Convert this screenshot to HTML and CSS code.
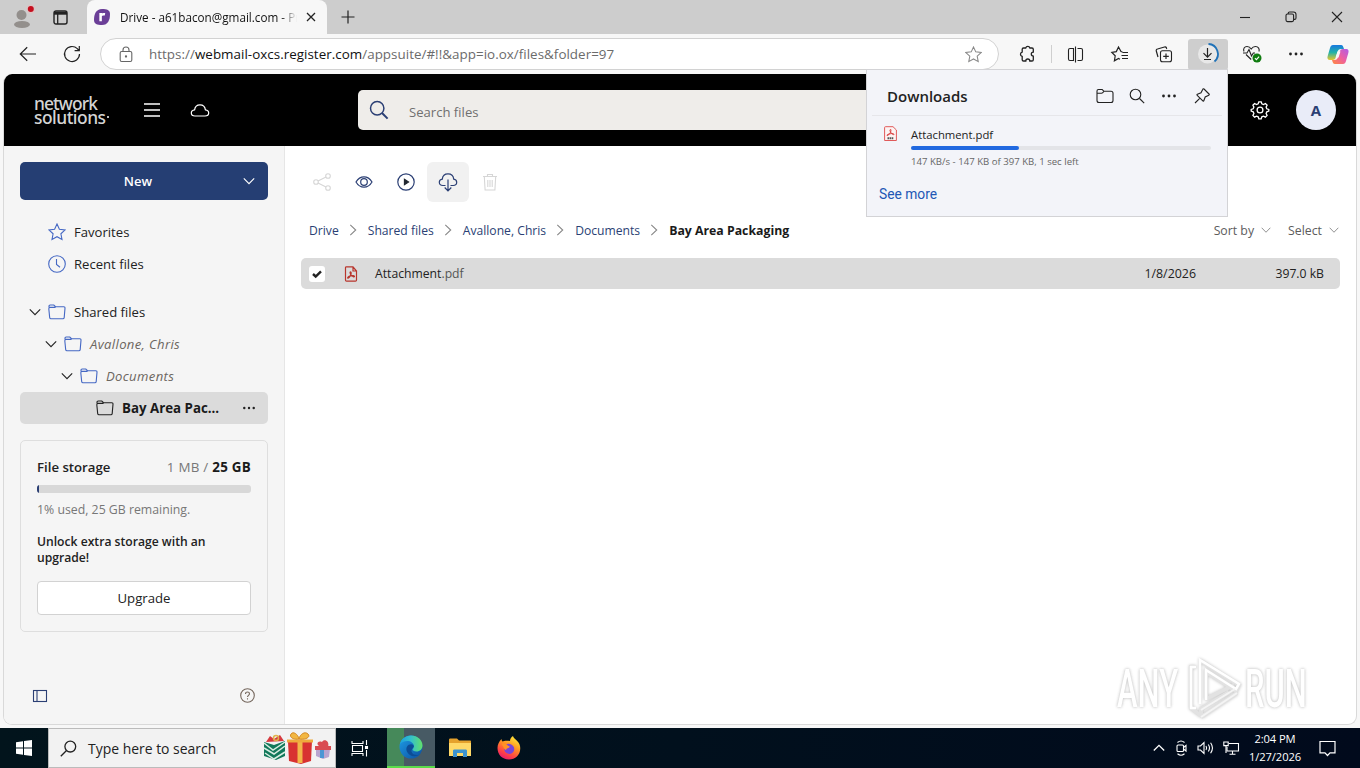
FILE: index.html
```html
<!DOCTYPE html>
<html lang="en">
<head>
	<meta charset="utf-8">
	<title>Drive - a61bacon@gmail.com</title>
	<link rel="stylesheet" href="styles.css">
</head>
<body>
	<!-- shared icons -->
	<svg class="defs" width="0" height="0">
		<defs>
			<linearGradient id="edgeA" x1="0" y1="0" x2="1" y2="0"><stop offset="0" stop-color="#1aa0e0"/><stop offset=".5" stop-color="#35c1c9"/><stop offset="1" stop-color="#62e06a"/></linearGradient>
			<linearGradient id="edgeB" x1="0" y1="0" x2="1" y2="1"><stop offset="0" stop-color="#1e9de5"/><stop offset="1" stop-color="#0b4fa0"/></linearGradient>
			<linearGradient id="fox" x1=".8" y1="0" x2=".3" y2="1"><stop offset="0" stop-color="#fff03c"/><stop offset=".4" stop-color="#ff9a22"/><stop offset=".75" stop-color="#ff4444"/><stop offset="1" stop-color="#e8186e"/></linearGradient>
			<linearGradient id="cpA" x1="0" y1="0" x2="0" y2="1"><stop offset="0" stop-color="#1778e0"/><stop offset=".5" stop-color="#23b2a8"/><stop offset="1" stop-color="#e8c72c"/></linearGradient>
			<linearGradient id="cpB" x1="1" y1="0" x2="0" y2="1"><stop offset="0" stop-color="#b05ce8"/><stop offset=".5" stop-color="#ee5fa0"/><stop offset="1" stop-color="#ff8a3c"/></linearGradient>
			<symbol id="folder" viewBox="0 0 18 16"><path d="M1 3.2V2.3C1 1.6 1.5 1 2.2 1h3.6l1.7 1.7h8.3c.8 0 1.3.6 1.2 1.4l-.8 9.5c-.1.7-.6 1.2-1.3 1.2H3c-.7 0-1.2-.5-1.3-1.2L.8 4.7C.8 4 1.2 3.4 2 3.4h5l.8-.7"/></symbol>
			<symbol id="chev" viewBox="0 0 12 12"><path d="M.8 3.3L6 8.7l5.200-5.400"/></symbol>
			<symbol id="chevr" viewBox="0 0 12 12"><path d="M3.300 .8L8.700 6l-5.400 5.200"/></symbol>
			<symbol id="star" viewBox="0 0 18 18"><path d="M9 1l2.400 5.200 5.700.7-4.200 3.900 1.100 5.700L9 13.700l-5 2.800 1.100-5.700L.9 6.900l5.700-.7z"/></symbol>
			<symbol id="dots" viewBox="0 0 14 4"><circle cx="1.500" cy="2" r="1.400"/><circle cx="7" cy="2" r="1.400"/><circle cx="12.500" cy="2" r="1.400"/></symbol>
		</defs>
	</svg>

	<div class="tabstrip">
		<div class="profile">
			<svg width="22" height="24" viewBox="0 0 22 24"><circle cx="9.500" cy="10" r="5" fill="#938f8c"/><ellipse cx="10" cy="19.500" rx="8" ry="3.500" fill="#938f8c"/><circle cx="18.800" cy="4" r="4.500" fill="#dcc4c4"/><circle cx="18.800" cy="4" r="3" fill="#c50f1f"/></svg>
		</div>
		<svg class="line workspaces" width="15" height="15" viewBox="0 0 15 15"><rect x="1" y="1" width="13" height="13" rx="2" stroke-width="1.400"/><path d="M1 3.200h13" stroke-width="3"/><path d="M4.700 4v10" stroke-width="1.300"/></svg>
		<div class="tab">
			<svg width="16" height="16" viewBox="0 0 16 16"><path d="M8 0c5 0 8 1 8 5 0 6-2 11-8 11-5 0-8-1-8-5C0 5 2 0 8 0z" fill="#6b3f97"/><path d="M6.600 12.300V4M6.500 8c0-2.500 1.800-3.200 4.500-2.700" fill="none" stroke="#fff" stroke-width="2.500"/></svg>
			<span class="tab_title">Drive - a61bacon@gmail.com - Pr</span>
			<svg class="line" width="10" height="10" viewBox="0 0 10 10"><path d="M1 1l8 8M9 1L1 9" stroke-width="1.300"/></svg>
		</div>
		<svg class="line newtab" width="14" height="14" viewBox="0 0 14 14"><path d="M7 .5v13M.5 7h13" stroke-width="1.200"/></svg>
		<div class="win_btns">
			<svg class="line" width="12" height="12" viewBox="0 0 12 12"><path d="M1 6.500h10"/></svg>
			<svg class="line" width="12" height="12" viewBox="0 0 12 12"><rect x="1" y="3" width="7.600" height="7.600" rx="1.500"/><path d="M3.200 3V2.300c0-.8.500-1.300 1.300-1.300H8.500C10 1 11 2 11 3.500V7c0 .8-.6 1.400-1.400 1.400H8.800"/></svg>
			<svg class="line" width="12" height="12" viewBox="0 0 12 12"><path d="M1 1l10 10M11 1L1 11"/></svg>
		</div>
	</div>

	<div class="toolbar">
		<div class="tb"><svg class="line" width="18" height="16" viewBox="0 0 18 16"><path d="M17 8H1.500M8.200 1.200L1.300 8l6.900 6.800" stroke-width="1.200"/></svg></div>
		<div class="tb"><svg class="line" width="18" height="18" viewBox="0 0 18 18"><path d="M16.500 9A7.500 7.500 0 1 1 14.300 3.700L16 5.500M16.300 1v4.700h-4.700" stroke-width="1.200"/></svg></div>
		<div class="omnibox">
			<svg class="line grey" width="14" height="17" viewBox="0 0 14 17"><rect x="1.200" y="5.500" width="11.600" height="10" rx="1.500"/><path d="M4 5.500V4a3 3 0 0 1 6 0v1.500"/><circle cx="7" cy="10.500" r=".6" fill="#666"/></svg>
			<span class="url">https://<b>webmail-oxcs.register.com</b>/appsuite/#!!&amp;app=io.ox/files&amp;folder=97</span>
			<svg class="line lgrey" width="17" height="17"><use href="#star"/></svg>
		</div>
		<div class="tb ext"><svg class="line" width="18" height="18" viewBox="0 0 18 18"><path d="M5.500 3h2.200a2.200 2.200 0 0 1 4.200 0H14c.8 0 1.300.5 1.300 1.300v2.800a2 2 0 0 0 0 4v3.600c0 .8-.5 1.300-1.300 1.300h-2.200a2 2 0 0 0-4 0H5.500c-.8 0-1.300-.5-1.300-1.300v-3.300a2.200 2.200 0 0 1 0-4.300V4.300C4.200 3.500 4.700 3 5.500 3z" stroke-width="1.300"/></svg></div>
		<div class="tb_sep"></div>
		<div class="tb split"><svg class="line" width="17" height="17" viewBox="0 0 17 17"><path d="M6.500 2.500H3c-1 0-1.500.6-1.500 1.500v9c0 1 .5 1.500 1.500 1.500h3.500zM10.500 2.500H14c1 0 1.500.6 1.500 1.500v9c0 1-.5 1.500-1.500 1.500h-3.500M8.500.5v16"/></svg></div>
		<div class="tb"><svg class="line" width="18" height="17" viewBox="0 0 18 17"><path d="M11.500 6L10 5.600 7.500 1 5.300 5.600.8 6.300l3.400 3.500-.8 5 4.100-2.300 1.500.8M11.500 6.500H17M10.500 9.500H17M11 12.500h6" stroke-width="1.200"/></svg></div>
		<div class="tb"><svg class="line" width="18" height="18" viewBox="0 0 18 18"><rect x="5.500" y="5.800" width="11" height="11" rx="2"/><path d="M11 8.500v5.600M8.200 11.300h5.600M3 12L1.300 6c-.3-1 .2-1.800 1.200-2l7-2c1-.3 1.800.2 2 1.200l.2.800" stroke-width="1.200"/></svg></div>
		<div class="tb tb_on"><svg class="line" width="22" height="22" viewBox="0 0 22 22"><circle cx="10.500" cy="11" r="9.500" fill="#e8e8e8" stroke="none"/><path d="M10.500 5v9M6.500 10.200l4 4 4-4M7 16.500h7" stroke-width="1.200"/><path d="M11.500 1A10 10 0 0 1 17.500 18.500" stroke="#1f72b8" stroke-width="1.800"/></svg></div>
		<div class="tb"><svg class="line" width="20" height="18" viewBox="0 0 20 18"><path d="M9.200 14.500L4 9.500M2 6.500C.8 3.700 2.500 1.500 5 1.500c2 0 3.300 1 4.200 2.500 1-1.500 2.200-2.500 4.200-2.500 3 0 4.500 2.600 3.500 5M1 8h4l2-3.500 2.500 6.500 1.800-3H13" stroke-width="1.100"/><circle cx="15" cy="13" r="4.500" fill="#107c10" stroke="none"/><path d="M12.900 13.200l1.500 1.400 2.700-3" stroke="#fff"/></svg></div>
		<div class="tb"><svg class="dots" width="14" height="4"><use href="#dots"/></svg></div>
		<div class="tb copilot"><svg width="22" height="21" viewBox="0 0 22 21"><path d="M6 1h8c2 0 2.300 2 3 4h-3c-2 0-3 1-3.500 3L9 13c-.7 2-1.500 3-3.500 3H3C.5 16 0 14 .7 12L3 4c.5-2 1.500-3 3-3z" fill="url(#cpA)"/><path d="M16 20H8c-2 0-2.300-2-3-4h2.500c2 0 3-1 3.500-3l1.500-5c.7-2 1.500-3 3.500-3h3c2.500 0 3 2 2.300 4L19 17c-.5 2-1.500 3-3 3z" fill="url(#cpB)"/><path d="M10.500 7.500h3l-2 6H8.500z" fill="#f7f7f7"/></svg></div>
	</div>

	<div class="page">
		<div class="app_header">
			<div class="logo"><div>network</div><div class="logo2">solutions<i></i></div></div>
			<svg class="line white burger" width="16" height="14" viewBox="0 0 16 14"><path d="M0 1h16M0 7h16M0 13h16" stroke-width="1.300"/></svg>
			<svg class="line white cloud" width="20" height="15" viewBox="0 0 20 15"><path d="M5 13C2.800 13 1.300 11.800 1.300 10c0-1.700 1.300-3 3.300-3.200C5 3.800 7.200 1.800 10 1.800s5 2 5.400 5c2 .2 3.300 1.500 3.300 3.200 0 1.800-1.500 3-3.700 3z" stroke-width="1.200"/></svg>
			<div class="search">
				<svg class="line navy" width="20" height="20" viewBox="0 0 20 20"><circle cx="8.200" cy="8.200" r="6.700" stroke-width="1.500"/><path d="M13 13l5.600 5.600" stroke-width="2"/></svg>
				<span>Search files</span>
			</div>
			<svg class="line white gear" width="20" height="20" viewBox="0 0 20 20"><circle cx="10" cy="10" r="2.900" stroke-width="1.300"/><path d="M8.800 1.800h2.400l.6 2 1.700.7 1.900-1 1.700 1.700-1 1.900.7 1.700 2 .6v1.700l-2 .7-.7 1.700 1 1.900-1.700 1.700-1.900-1-1.700.7-.6 2H8.800l-.6-2-1.700-.7-1.900 1-1.700-1.700 1-1.900-.7-1.700-2-.7V9.400l2-.6.7-1.700-1-1.900 1.700-1.700 1.900 1 1.700-.7z" stroke-width="1.300"/></svg>
			<div class="avatar">A</div>
		</div>

		<div class="app_body">
			<div class="sidebar">
				<div class="new_btn"><span>New</span><svg class="line white" width="12" height="12"><use href="#chev"/></svg></div>
				<div class="tree">
					<div class="row lvl0"><i class="caret"></i><svg class="line blue" width="18" height="18"><use href="#star"/></svg><span>Favorites</span></div>
					<div class="row lvl0"><i class="caret"></i><svg class="line blue" width="18" height="18" viewBox="0 0 18 18"><circle cx="9" cy="9" r="8.300"/><path d="M8.500 4v5.500l3.500 2.700"/></svg><span>Recent files</span></div>
					<div class="row lvl0 spaced"><svg class="line caret" width="12" height="12"><use href="#chev"/></svg><svg class="line blue" width="18" height="16"><use href="#folder"/></svg><span>Shared files</span></div>
					<div class="row lvl1 virtual"><svg class="line caret" width="12" height="12"><use href="#chev"/></svg><svg class="line blue" width="18" height="16"><use href="#folder"/></svg><span>Avallone, Chris</span></div>
					<div class="row lvl2 virtual"><svg class="line caret" width="12" height="12"><use href="#chev"/></svg><svg class="line blue" width="18" height="16"><use href="#folder"/></svg><span>Documents</span></div>
					<div class="row lvl3 selected"><i class="caret"></i><svg class="line" width="18" height="16"><use href="#folder"/></svg><span>Bay Area Pac...</span><svg class="dots" width="12" height="4"><use href="#dots"/></svg></div>
				</div>
				<div class="storage">
					<div class="storage_head"><b>File storage</b><span>1 MB / <strong>25 GB</strong></span></div>
					<div class="quota"><div style="width: 1%"></div></div>
					<div class="storage_note">1% used, 25 GB remaining.</div>
					<div class="storage_ad">Unlock extra storage with an upgrade!</div>
					<div class="upgrade">Upgrade</div>
				</div>
				<div class="side_foot">
					<svg class="line navy" width="14" height="12" viewBox="0 0 14 12"><rect x=".5" y=".5" width="13" height="11"/><path d="M4 .5v11"/></svg>
					<svg class="line brown" width="15" height="15" viewBox="0 0 15 15"><circle cx="7.500" cy="7.500" r="6.800"/><path d="M5.500 6c0-2.700 4-2.500 4-.2 0 1.500-2 1.600-2 3.200M7.500 10.200v1.200"/></svg>
				</div>
			</div>

			<div class="content">
				<div class="actions">
					<div><svg class="line off" width="18" height="18" viewBox="0 0 18 18"><circle cx="3" cy="9" r="2.300"/><circle cx="15" cy="3" r="2.300"/><circle cx="15" cy="15" r="2.300"/><path d="M5 8l8-4M5 10l8 4"/></svg></div>
					<div><svg class="line navy" width="18" height="14" viewBox="0 0 18 14"><path d="M1 7c2-3.400 4.700-5.200 8-5.200S15 3.600 17 7c-2 3.400-4.700 5.200-8 5.200S3 10.400 1 7z" stroke-width="1.200"/><circle cx="9" cy="7" r="3.300" stroke-width="1.200"/></svg></div>
					<div><svg class="line navy" width="18" height="18" viewBox="0 0 18 18"><circle cx="9" cy="9" r="8.200" stroke-width="1.200"/><path d="M7.400 6.300l4.200 2.700-4.200 2.700z" fill="#20262f" stroke="#20262f"/></svg></div>
					<div class="hover"><svg class="line navy" width="20" height="19" viewBox="0 0 20 19"><path d="M7.500 12.500H4.800C2.500 12.500 1.300 11 1.300 9.300c0-1.700 1.300-3 3-3.200C4.600 3 7 .9 10 .9s5.400 2.100 5.700 5.200c1.700.2 3 1.500 3 3.200 0 1.700-1.200 3.200-3.500 3.200h-2.700M10 6.500v11M6.700 14.500l3.300 3.300 3.300-3.300" stroke-width="1.200"/></svg></div>
					<div><svg class="line off" width="16" height="18" viewBox="0 0 16 18"><path d="M1 3.500h14M5.500 3.500V1.500h5v2M2.300 3.500l.8 13.500h9.800l.8-13.500M5.800 7v7M8 7v7M10.200 7v7"/></svg></div>
				</div>
				<div class="crumbs">
					<span>Drive</span><svg class="line lgrey" width="12" height="12"><use href="#chevr"/></svg>
					<span>Shared files</span><svg class="line lgrey" width="12" height="12"><use href="#chevr"/></svg>
					<span>Avallone, Chris</span><svg class="line lgrey" width="12" height="12"><use href="#chevr"/></svg>
					<span>Documents</span><svg class="line lgrey" width="12" height="12"><use href="#chevr"/></svg>
					<b>Bay Area Packaging</b>
					<div class="sorting">
						<span>Sort by</span><svg class="line lgrey" width="10" height="10"><use href="#chev"/></svg>
						<span class="select">Select</span><svg class="line lgrey" width="10" height="10"><use href="#chev"/></svg>
					</div>
				</div>
				<div class="file">
					<div class="check"><svg width="10" height="8" viewBox="0 0 10 8"><path d="M1 4l2.700 2.500L9 1.300" fill="none" stroke="#222" stroke-width="2.400"/></svg></div>
					<svg class="pdf" width="14" height="16" viewBox="0 0 14 16"><path d="M1.500 1.500v12.500c0 .7.400 1.200 1 1.200h9c.6 0 1-.5 1-1.200V5L9 .8H2.500c-.6 0-1 .2-1 .7zM9 1v4h3.500M3.800 12.200c-.6-.8.700-1.800 2.700-2.300s4-.4 4 .5-2.300.1-3.500-1.400S5.900 5.800 6.600 5.800s.8 1.700.1 3.300-2.200 3.500-2.900 3.100z"/></svg>
					<span class="name">Attachment<em>.pdf</em></span>
					<span class="date">1/8/2026</span>
					<span class="size">397.0 kB</span>
				</div>
			</div>
		</div>
	</div>

	<div class="taskbar">
		<div class="start"><svg width="16" height="16" viewBox="0 0 16 16"><path d="M0 2.200L7 1.200v6.300H0zM8 1l8-1v7.500H8zM0 8.500h7v6.300l-7-1zM8 8.500h8V16l-8-1.100z" fill="#fff"/></svg></div>
		<div class="task_search">
			<svg class="line" width="17" height="17" viewBox="0 0 17 17"><circle cx="10.300" cy="6.600" r="5.400" stroke-width="1.300"/><path d="M6.500 10.500L.8 16.200" stroke-width="1.300"/></svg>
			<span>Type here to search</span>
			<svg width="68" height="34" viewBox="0 0 68 34">
				<path d="M3 11l4-6 4 3 6-4 4 6z" fill="#d63a3f"/><circle cx="13" cy="7" r="2.500" fill="none" stroke="#e0b34c" stroke-width="1.500"/>
				<path d="M1 11l10 3 11-4v15l-9 4-12-4z" fill="#12785a"/><path d="M1 12l9 7 12-8M1 17l10 6 11-8M2 22l9 6 11-7" fill="none" stroke="#d9ede2" stroke-width="1.500"/>
				<path d="M25 11l24-1-1 20-10 3-12-3z" fill="#d83131"/><path d="M37 10v22" stroke="#f3b449" stroke-width="5"/><path d="M24 10h26" stroke="#efaa3c" stroke-width="3"/><path d="M36 8c-6 1-10-2-8-5s7 0 8 5c1-5 6-8 9-5s-2 6-9 5z" fill="#f2b742" stroke="#d58a26"/>
				<path d="M53 17l14 1-1 8-6 2-7-3z" fill="#b9a4cf"/><path d="M59 17v10" stroke="#4b96d4" stroke-width="4"/><path d="M52 17h16" stroke="#d94b52" stroke-width="4"/><path d="M59 16c-7-1-5-7 0-5 2-4 8-1 6 5z" fill="#d94b52"/>
			</svg>
		</div>
		<div class="app_btn"><svg class="line white" width="18" height="17" viewBox="0 0 18 17"><path d="M1 1v2.500h11V1M1 16v-2.500h11V16M1.500 5.500h10v6h-10zM15.500 0v5M15.500 10v6.500"/><rect x="14.500" y="6.500" width="2" height="2" fill="#fff"/></svg></div>
		<div class="app_btn active">
			<svg width="24" height="24" viewBox="0 0 24 24"><circle cx="12" cy="12" r="11.500" fill="url(#edgeB)"/><path d="M.8 9.500C2 4 6.500.5 12 .5c6.500 0 11.500 4.700 11.500 10 0 3.800-2.800 6-6 6-2.700 0-3.900-.9-3.900-1.900 0-.7 1.300-1.300 1.300-3.300C14.900 8 11.500 6 8.300 6 5 6 2.200 7.500.8 9.500z" fill="url(#edgeA)"/><path d="M14.900 11.500c0-1.200-1-2.300-2.700-2.300-3.500 0-6 3.500-4.200 7.500 2 4.300 7.500 6 12.800 2.800-3.200 1.200-7.500.6-8.300-3-.3-2 1.200-3 2.400-5z" fill="#0c4d96"/></svg>
		</div>
		<div class="app_btn"><svg width="22" height="20" viewBox="0 0 22 20"><path d="M0 2c0-1 .4-1.500 1.300-1.500H8l2 2h11c.6 0 1 .4 1 1V18H0z" fill="#e5a22d"/><path d="M0 5h22v13H0z" fill="#ffd968"/><path d="M4 19v-6c0-1 .5-1.500 1.500-1.500h11c1 0 1.500.5 1.500 1.500v6h-4v-4H8v4z" fill="#3d93cf"/></svg></div>
		<div class="app_btn"><svg width="24" height="24" viewBox="0 0 24 24"><path d="M13 5c0-2 1-4 3-5 .3 3 6 4.500 7 10 1.500 7.500-4 13.500-11 13.500S.5 18.500.5 12C.5 8.500 2 5.500 4.500 3c0 1 .5 2 1 2.500C7 5 8.500 4.200 13 5z" fill="url(#fox)"/><path d="M7 12c0-3 3-5 6-4s5 3.500 4 6.500-4 4-6.500 3S7 14.500 7 12z" fill="#7845d8"/><path d="M4.500 8c3-1 5 0 6.500 1.800 1 .2 2 .7 1.700 1.200-1 1.300-3.200 1-3.700 3-1.500-.4-2.500-1.700-2.500-3z" fill="#ff9226"/></svg></div>
		<div class="tray">
			<svg class="line white" width="12" height="12" viewBox="0 0 12 12"><path d="M.8 8.500L6 3.300l5.200 5.200" stroke-width="1.300"/></svg>
			<svg class="line white" width="14" height="16" viewBox="0 0 14 16"><rect x="3" y="5" width="6.500" height="6.500" rx="1"/><path d="M9.500 7.500l2.500-2v5.500L9.500 9M3.500 2.500c2-1.700 5-1.700 7 0M3.500 13.800c2 1.600 5 1.600 7 0"/></svg>
			<svg class="line white" width="17" height="14" viewBox="0 0 17 14"><path d="M1 5h2.500L7 1.500v11L3.500 9H1zM9 5c.8 1.300.8 2.700 0 4M11.300 3.500c1.600 2.300 1.600 4.700 0 7M13.600 1.800c2.500 3.500 2.500 6.900 0 10.400"/></svg>
			<svg class="line white" width="16" height="14" viewBox="0 0 16 14"><path d="M6 2.500h9.500v7.500H4V6M9.500 10v3M6.500 13.300h6"/><path d="M.8 1h4.400v3.600H.8zM3 4.500V12"/></svg>
			<div class="clock">2:04 PM<br>1/27/2026</div>
			<svg class="line white note" width="17" height="17" viewBox="0 0 17 17"><path d="M1 1.500h15v11.300h-5L8.500 15.500 6 12.800H1z" stroke-width="1.200"/></svg>
		</div>
	</div>

	<div class="downloads">
		<div class="dl_head">
			<b>Downloads</b>
			<svg class="line" width="18" height="16" viewBox="0 0 18 16"><path d="M1 3c0-1 .6-1.500 1.500-1.500h3.700L8 3.300h7c1.200 0 2 .8 2 2v7.200c0 1.200-.8 2-2 2H3c-1.200 0-2-.8-2-2zM1 5.300h4.500c1 0 1.500-.5 2.500-2"/></svg>
			<svg class="line glass" width="16" height="16" viewBox="0 0 16 16"><circle cx="6.500" cy="6.500" r="5.300"/><path d="M10.500 10.500l4.700 4.700"/></svg>
			<svg class="dots" width="14" height="4"><use href="#dots"/></svg>
			<svg class="line pin" width="16" height="16" viewBox="0 0 16 16"><path d="M10 1l5 5c.5.500.3 1-.2 1.200L11.200 9l-1.400 3.700c-.2.500-.7.600-1 .2L3.200 7.300c-.4-.4-.3-.9.200-1.100L7 4.800 8.800 1.200C9 .7 9.600.6 10 1zM6 10.200L1 15"/></svg>
		</div>
		<div class="dl_item">
			<svg width="13" height="16" viewBox="0 0 13 16"><path d="M.6 1.500v13h11.800V4L9 .7H1.500c-.6 0-.9.300-.9.800z" fill="#fdf3f3" stroke="#e05a5a"/><path d="M3 9.500c-.3-.9 1.500-1.500 3.500-1.800s3.700 0 3.500.7-2-.2-3-1.700S5.600 4 6.300 3.500s.9 1 .2 2.800S3.500 10 3 9.500z" fill="none" stroke="#d83b3b"/><path d="M3.500 12.300h6" stroke="#555" stroke-width="2" stroke-dasharray="1.600 .5"/></svg>
			<div class="dl_info">
				<div class="dl_name">Attachment.pdf</div>
				<div class="dl_bar"><div style="width: 36%"></div></div>
				<div class="dl_stat">147 KB/s - 147 KB of 397 KB, 1 sec left</div>
			</div>
		</div>
		<div class="see_more">See more</div>
	</div>

	<div class="watermark">
		<span>ANY</span>
		<svg width="56" height="64" viewBox="0 0 56 64"><path d="M14 4l38 24-3 6-30-19v28M9 10H4v41l9 7M19 42l28-14M14 60l36-24M14 60v-8l28-17" fill="none" stroke="#e2e2e2" stroke-width="4"/><path d="M9 10H4v41h5M19 43V13l30 19 3-5L13 3v44" fill="none" stroke="#fff" stroke-width="2.500"/><path d="M14 53l34-21M14 60l36-24" fill="none" stroke="#f4f4f4" stroke-width="2"/></svg>
		<span>RUN</span>
	</div>
</body>
</html>
```
FILE: styles.css
```css
* {
	box-sizing: border-box;
}
body {
	margin: 0;
	width: 1360px;
	height: 768px;
	overflow: hidden;
	position: relative;
	display: flex;
	flex-direction: column;
	background: #f7f7f7;
	color: #222;
	font-family: "Open Sans", "Noto Sans", sans-serif;
	font-size: 13px;
	white-space: nowrap;
}
svg {
	flex: none;
	display: block;
	overflow: visible;
}
.defs {
	position: absolute;
}
.line {
	fill: none;
	stroke: #222;
	stroke-width: 1.1;
}
.grey { stroke: #666; }
.lgrey { stroke: #888; }
.white { stroke: #fff; }
.navy { stroke: #2b3f74; }
.blue { stroke: #4568c4; }
.brown { stroke: #75675d; }
.off { stroke: #d6d6d6; }
.dots {
	fill: #222;
}

/* browser tabs */
.tabstrip {
	display: flex;
	align-items: center;
	height: 34px;
	flex: none;
	background: #cdcdcd;
}
.profile {
	width: 41px;
	padding-left: 12px;
}
.workspaces {
	margin: 0 19px 0 12px;
}
.tab {
	display: flex;
	align-items: center;
	width: 240px;
	height: 34px;
	padding: 0 11px 0 7px;
	background: #f7f7f7;
	border-radius: 8px 8px 0 0;
}
.tab_title {
	width: 177px;
	margin: 0 auto 0 10px;
	overflow: hidden;
	font-size: 11.7px;
	background: linear-gradient(90deg, #111 91%, transparent);
	background-clip: text;
	-webkit-text-fill-color: transparent;
}
.newtab {
	margin-left: 14px;
}
.win_btns {
	display: flex;
	gap: 34px;
	margin-left: auto;
	padding-right: 17px;
}

/* browser toolbar */
.toolbar {
	display: flex;
	align-items: center;
	gap: 4px;
	height: 40px;
	flex: none;
	padding-left: 8px;
}
.tb {
	display: flex;
	align-items: center;
	justify-content: center;
	width: 40px;
	height: 31px;
}
.omnibox {
	display: flex;
	align-items: center;
	width: 899px;
	height: 32px;
	margin-left: 4px;
	padding: 0 16px 0 18px;
	background: #fff;
	border: 1px solid #d2d2d2;
	border-radius: 16px;
}
.url {
	flex: 1;
	margin-left: 16px;
	color: #6b6b6b;
	font-size: 13.4px;
	letter-spacing: .03px;
}
.url b {
	color: #111;
	font-weight: normal;
}
.ext {
	margin-left: 4px;
}
.tb_sep {
	width: 1px;
	height: 18px;
	background: #cfcfcf;
}
.split {
	padding-right: 1px;
}
.tb_on {
	background: #cecece;
	border-radius: 3px;
}
.copilot {
	width: 36px;
}

/* web page */
.page {
	display: flex;
	flex-direction: column;
	height: 651px;
	flex: none;
	margin: 0 3px;
	border: 1px solid #d9d9d9;
	border-top: 0;
	border-radius: 9px;
	overflow: hidden;
	background: #fff;
}
.app_header {
	display: flex;
	align-items: center;
	height: 72px;
	flex: none;
	padding: 0 20px 0 30px;
	background: #000;
}
.logo {
	width: 78px;
	color: #d4d4d4;
	font: 500 17.4px/14px "Noto Sans", sans-serif;
	letter-spacing: -.9px;
}
.logo2 {
	letter-spacing: -.5px;
}
.logo i {
	display: inline-block;
	width: 2px;
	height: 2px;
	margin-left: 1px;
	vertical-align: 6px;
	background: #bbb;
}
.burger {
	margin-left: 32px;
}
.cloud {
	margin-left: 30px;
}
.search {
	display: flex;
	align-items: center;
	width: 644px;
	height: 40px;
	margin-left: 148px;
	padding-left: 11px;
	border-radius: 5px;
	background: #efedea;
	color: #6f6f6f;
}
.search span {
	margin-left: 20px;
	padding-top: 4px;
	font-size: 13.1px;
}
.gear {
	margin-left: auto;
}
.avatar {
	width: 40px;
	height: 40px;
	margin-left: 26px;
	border-radius: 50%;
	background: #e9ecf8;
	color: #2b3f74;
	font-size: 15px;
	font-weight: 700;
	line-height: 40px;
	text-align: center;
}
.app_body {
	display: flex;
	flex: 1;
}
.sidebar {
	display: flex;
	flex-direction: column;
	width: 281px;
	padding: 16px;
	background: #f5f5f5;
	border-right: 1px solid #e6e6e6;
}
.new_btn {
	display: flex;
	align-items: center;
	height: 38px;
	padding-right: 13px;
	border-radius: 5px;
	background: #253e73;
	color: #fff;
	font-weight: 600;
}
.new_btn span {
	flex: 1;
	padding-left: 13px;
	text-align: center;
}
.tree {
	padding-top: 16px;
}
.row {
	display: flex;
	align-items: center;
	height: 32px;
	padding: 0 13px 0 9px;
	border-radius: 5px;
	font-size: 13.1px;
}
.row .caret {
	width: 12px;
	margin-right: 7px;
}
.row span {
	flex: 1;
	margin-left: 8px;
}
.lvl1 { padding-left: 25px; }
.lvl2 { padding-left: 41px; }
.lvl3 { padding-left: 57px; }
.spaced {
	margin-top: 16px;
}
.virtual {
	color: #6c665f;
	font-style: italic;
	letter-spacing: .35px;
}
.selected {
	background: #dbdbdb;
	color: #1a1a1a;
	font-size: 13.3px;
	font-weight: 700;
}
.storage {
	height: 192px;
	margin-top: 16px;
	padding: 17px 16px 0;
	border: 1px solid #dedede;
	border-radius: 5px;
}
.storage_head {
	display: flex;
	justify-content: space-between;
	line-height: 18px;
}
.storage_head b {
	font-weight: 600;
	font-size: 13.2px;
}
.storage_head span {
	color: #777;
	font-size: 13.4px;
	letter-spacing: .25px;
}
.storage_head strong {
	color: #1a1a1a;
}
.quota {
	height: 8px;
	margin-top: 9px;
	border-radius: 3px;
	background: #d8d8d8;
	overflow: hidden;
}
.quota div {
	height: 8px;
	background: #2b3f74;
}
.storage_note {
	margin-top: 9px;
	color: #777;
	font-size: 12.3px;
	line-height: 16px;
}
.storage_ad {
	margin-top: 16px;
	font-size: 12.15px;
	font-weight: 600;
	line-height: 16px;
	white-space: normal;
}
.upgrade {
	height: 34px;
	margin-top: 15px;
	border: 1px solid #d2d2d2;
	border-radius: 4px;
	background: #fff;
	font-size: 13.2px;
	line-height: 32px;
	text-align: center;
}
.side_foot {
	display: flex;
	align-items: center;
	justify-content: space-between;
	margin-top: auto;
	padding: 0 13px 5px;
}

/* file list */
.content {
	flex: 1;
	padding: 16px 16px 0;
}
.actions {
	display: flex;
	height: 40px;
}
.actions div {
	display: flex;
	align-items: center;
	justify-content: center;
	width: 42px;
	border-radius: 6px;
}
.actions .hover {
	background: #f1f1f1;
}
.crumbs {
	display: flex;
	align-items: center;
	height: 30px;
	margin-top: 13px;
	padding-left: 8px;
	color: #2b3f74;
	font-size: 12.15px;
}
.crumbs > svg {
	margin: 0 9px 0 8px;
}
.crumbs b {
	color: #1a1a1a;
	font-size: 12.3px;
}
.sorting {
	display: flex;
	align-items: center;
	margin-left: auto;
	padding-right: 1px;
	color: #5c5c5c;
	font-size: 12.3px;
}
.sorting svg {
	margin-left: 7px;
}
.select {
	margin-left: 17px;
}
.file {
	display: flex;
	align-items: center;
	height: 31px;
	margin-top: 13px;
	padding: 0 16px 0 8px;
	border-radius: 5px;
	background: #dbdbdb;
	font-size: 12.2px;
}
.check {
	display: flex;
	align-items: center;
	justify-content: center;
	width: 16px;
	height: 16px;
	border-radius: 3px;
	background: #fff;
}
.pdf {
	margin-left: 19px;
	fill: none;
	stroke: #b8352c;
	stroke-width: 1.2;
}
.name {
	flex: 1;
	margin-left: 17px;
}
.name em {
	color: #555;
	font-style: normal;
}
.date {
	font-size: 12.4px;
}
.size {
	width: 128px;
	text-align: right;
}

/* downloads flyout */
.downloads {
	position: absolute;
	left: 866px;
	top: 69px;
	width: 362px;
	height: 148px;
	padding: 0 5px;
	border: 1px solid #d3d3d6;
	background: #f3f4f9;
}
.dl_head {
	display: flex;
	align-items: center;
	height: 46px;
	padding: 7px 12px 0 15px;
	border-bottom: 1px solid #e6e6ea;
}
.dl_head b {
	flex: 1;
	font-size: 15px;
	font-weight: 600;
}
.dl_head .glass {
	margin-left: 15px;
}
.dl_head .dots {
	margin-left: 17px;
}
.dl_head .pin {
	margin-left: 18px;
}
.dl_item {
	display: flex;
	padding: 10px 11px 0 12px;
}
.dl_info {
	flex: 1;
	margin-left: 14px;
}
.dl_name {
	font-size: 11.3px;
	line-height: 18px;
}
.dl_bar {
	height: 4px;
	margin-top: 2px;
	border-radius: 2px;
	background: #e3e4e8;
}
.dl_bar div {
	height: 4px;
	border-radius: 2px;
	background: #2169e0;
}
.dl_stat {
	margin-top: 5px;
	color: #666;
	font-size: 9.6px;
	line-height: 14px;
}
.see_more {
	margin: 16px 0 0 7px;
	color: #2257b5;
	font: 13.8px/18px Roboto, sans-serif;
}

/* Windows taskbar */
.taskbar {
	display: flex;
	height: 40px;
	flex: none;
	margin-top: 3px;
	background: linear-gradient(90deg, #02141c, #01101d 50%, #010a1c);
}
.start, .app_btn {
	display: flex;
	align-items: center;
	justify-content: center;
	width: 48px;
	margin-right: 1px;
}
.start {
	margin: 0;
}
.task_search {
	display: flex;
	align-items: center;
	width: 288px;
	padding: 0 4px 0 11px;
	border: 1px solid #bbb;
	background: #f2f2f2;
	font-size: 13.95px;
}
.task_search span {
	flex: 1;
	margin-left: 11px;
}
.active {
	margin-left: 2px;
	border-bottom: 2px solid #5bdc4a;
	background: linear-gradient(90deg, #46895a 17px, #475a64 17px);
}
.tray {
	display: flex;
	align-items: center;
	margin-left: auto;
	padding-right: 24px;
}
.tray svg {
	margin-right: 9px;
}
.tray .note {
	margin: 0 0 0 17px;
}
.clock {
	width: 54px;
	color: #fff;
	font-size: 11.2px;
	letter-spacing: -.1px;
	line-height: 18px;
	text-align: center;
}

.watermark {
	position: absolute;
	left: 1117px;
	top: 657px;
	display: flex;
	align-items: center;
	color: #fff;
	font: 500 31px/36px Roboto, sans-serif;
}
.watermark svg {
	margin: 0 2px 0 4px;
	filter: drop-shadow(0 0 1.5px #c4c4c4);
}
.watermark span {
	width: 66px;
	text-shadow: 0 0 2px #c4c4c4, 0 0 3px #ddd;
	transform: scaleY(1.75);
}
```
